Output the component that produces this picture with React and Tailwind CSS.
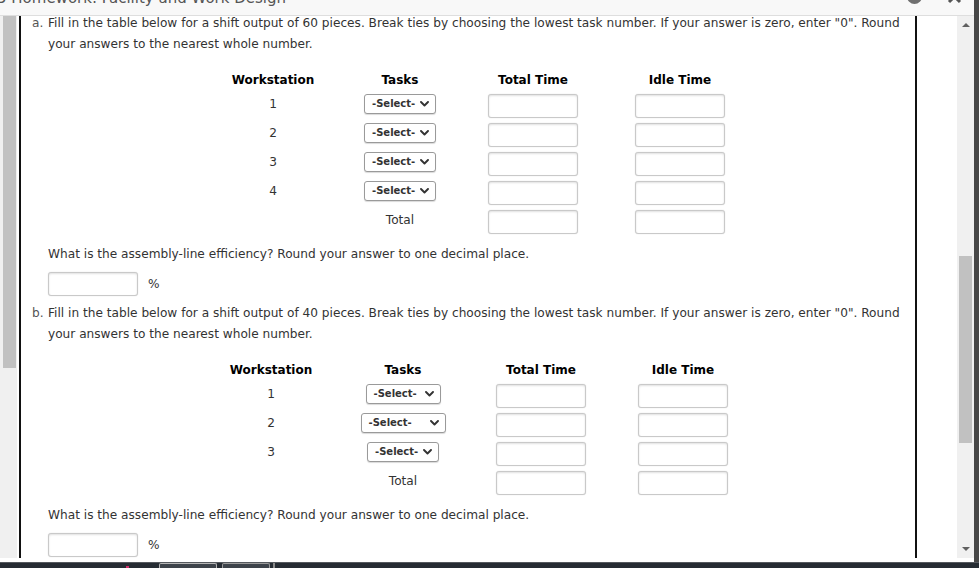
import React from "react";

function Chevron() {
  return (
    <svg width="9" height="6" viewBox="0 0 9 6" className="shrink-0">
      <path d="M1 1 L4.5 4.5 L8 1" fill="none" stroke="#333" strokeWidth="1.9" strokeLinecap="round" strokeLinejoin="round" />
    </svg>
  );
}

function Sel({ className }) {
  return (
    <div className={"h-[20px] flex items-center justify-between bg-white border border-[#9a9a9a] rounded-[3px] shadow-[0_1px_1px_rgba(0,0,0,0.15)] pl-[7px] pr-[6px] " + className}>
      <span className="text-[10px] leading-[12px] font-bold text-[#333]">-Select-</span>
      <Chevron />
    </div>
  );
}

function Box() {
  return (
    <div className="w-[90px] h-[24px] bg-white border border-[#c9c9c9] rounded-[3px] shadow-[inset_0_1px_2px_rgba(0,0,0,0.12),0_0_1px_rgba(0,0,0,0.2)]" />
  );
}

function Cell({ children }) {
  return <div className="flex justify-center">{children}</div>;
}

function TextCell({ children }) {
  return <div className="flex justify-center h-[20px] leading-[20px] text-[#333]">{children}</div>;
}

function Efficiency({ className }) {
  return (
    <div className={className}>
      <p className="whitespace-nowrap">What is the assembly-line efficiency? Round your answer to one decimal place.</p>
      <div className="flex items-center gap-[10px] mt-[7px]">
        <Box />
        <span className="text-[#333]">%</span>
      </div>
    </div>
  );
}

export default function App() {
  const rowsA = [
    { n: "1", s: "w-[72px]" },
    { n: "2", s: "w-[72px]" },
    { n: "3", s: "w-[72px]" },
    { n: "4", s: "w-[72px]" },
  ];
  const rowsB = [
    { n: "1", s: "w-[75px]" },
    { n: "2", s: "w-[85px]" },
    { n: "3", s: "w-[72px]" },
  ];
  return (
    <div className="w-[979px] h-[568px] overflow-hidden bg-white flex flex-col font-['DejaVu_Sans',sans-serif]">
      <div className="flex flex-1 min-h-0">
        <div className="flex-1 flex flex-col min-w-0">
          {/* top title bar (scrolled) */}
          <div className="h-[16px] shrink-0 bg-[#f8f8f8] border-b border-[#dedede] overflow-hidden flex items-start">
            <div className="-mt-[10px] -ml-[3px] text-[15px] leading-[17px] text-[#555] whitespace-nowrap">
              5 Homework: Facility and Work Design
            </div>
            <div className="flex-1" />
            <div className="w-[15px] h-[15px] rounded-full bg-[#707070] -mt-[11px]" />
            <svg width="15" height="15" viewBox="0 0 15 15" className="-mt-[11px] ml-[25px] mr-[12px]">
              <path d="M2 2 L13 13 M13 2 L2 13" stroke="#555" strokeWidth="3" />
            </svg>
          </div>

          {/* middle */}
          <div className="flex flex-1 min-h-0">
            {/* left scrollbar */}
            <div className="w-[17px] bg-[#f0f0f0] pl-[3px] pr-[1px]">
              <div className="w-[13px] h-[352px] bg-[#c1c1c1]" />
            </div>
            <div className="w-[2px] bg-white" />
            <div className="w-[2px] bg-[#111]" />

            {/* content */}
            <div className="w-[894px] overflow-hidden text-[12.15px] leading-[21px] text-[#333]">
              <div className="-mt-[3px] pl-[27px]">
                <p className="whitespace-nowrap">
                  <span className="inline-block w-[16px] -ml-[16px] text-[#555]">a.</span>Fill in the table below for a shift output of 60 pieces. Break ties by choosing the lowest task number. If your answer is zero, enter "0". Round
                  <br />
                  your answers to the nearest whole number.
                </p>

                {/* Table A */}
                <div className="ml-[162px] mt-[15px]">
                  <div className="grid grid-cols-[126px_128px_138px_156px] h-[20px] leading-[20px] text-[12px] font-bold text-black text-center">
                    <div>Workstation</div>
                    <div>Tasks</div>
                    <div>Total Time</div>
                    <div>Idle Time</div>
                  </div>
                  {rowsA.map((r) => (
                    <div key={r.n} className="grid grid-cols-[126px_128px_138px_156px] h-[29px] pt-[4px] items-start">
                      <TextCell>{r.n}</TextCell>
                      <Cell><Sel className={r.s} /></Cell>
                      <Cell><Box /></Cell>
                      <Cell><Box /></Cell>
                    </div>
                  ))}
                  <div className="grid grid-cols-[126px_128px_138px_156px] h-[29px] pt-[4px] items-start">
                    <div />
                    <TextCell>Total</TextCell>
                    <Cell><Box /></Cell>
                    <Cell><Box /></Cell>
                  </div>
                </div>

                <Efficiency className="mt-[9px]" />

                <p className="whitespace-nowrap mt-[7px]">
                  <span className="inline-block w-[16px] -ml-[16px] text-[#555]">b.</span>Fill in the table below for a shift output of 40 pieces. Break ties by choosing the lowest task number. If your answer is zero, enter "0". Round
                  <br />
                  your answers to the nearest whole number.
                </p>

                {/* Table B */}
                <div className="ml-[157px] mt-[15px]">
                  <div className="grid grid-cols-[132px_132px_144px_140px] h-[20px] leading-[20px] text-[12px] font-bold text-black text-center">
                    <div>Workstation</div>
                    <div>Tasks</div>
                    <div>Total Time</div>
                    <div>Idle Time</div>
                  </div>
                  {rowsB.map((r) => (
                    <div key={r.n} className="grid grid-cols-[132px_132px_144px_140px] h-[29px] pt-[4px] items-start">
                      <TextCell>{r.n}</TextCell>
                      <Cell><Sel className={r.s} /></Cell>
                      <Cell><Box /></Cell>
                      <Cell><Box /></Cell>
                    </div>
                  ))}
                  <div className="grid grid-cols-[132px_132px_144px_140px] h-[29px] pt-[4px] items-start">
                    <div />
                    <TextCell>Total</TextCell>
                    <Cell><Box /></Cell>
                    <Cell><Box /></Cell>
                  </div>
                </div>

                <Efficiency className="mt-[9px]" />
              </div>
            </div>

            <div className="w-[2px] bg-[#111]" />
            <div className="flex-1 bg-white" />

            {/* right scrollbar */}
            <div className="w-[17px] bg-[#f0f0f0] flex flex-col">
              <div className="h-[17px] flex items-center justify-center">
                <svg width="8" height="5" viewBox="0 0 8 5"><path d="M0 5 L4 1 L8 5 Z" fill="#606060" /></svg>
              </div>
              <div className="h-[223px]" />
              <div className="w-[13px] h-[187px] bg-[#c1c1c1] mx-auto" />
              <div className="flex-1" />
              <div className="h-[17px] flex items-center justify-center">
                <svg width="8" height="5" viewBox="0 0 8 5"><path d="M0 0 L4 4 L8 0 Z" fill="#606060" /></svg>
              </div>
            </div>
          </div>
          <div className="h-[4px] shrink-0 bg-white" />
        </div>
        <div className="w-[5px] bg-[#474747]" />
      </div>

      {/* taskbar strip */}
      <div className="h-[6px] shrink-0 bg-[#262c33] border-t border-[#55595e] flex items-end">
        <div className="ml-[126px] w-[3px] h-[2px] bg-[#d0306a]" />
        <div className="ml-[30px] w-[58px] h-[5px] bg-[#3d434a] border-t border-x border-[#b5b5b5] rounded-t-[2px]" />
        <div className="ml-[5px] w-[48px] h-[5px] bg-[#3d434a] border-t border-x border-[#9a9a9a] rounded-t-[2px]" />
        <div className="ml-[3px] w-[2px] h-[5px] bg-[#8a8a8a]" />
      </div>
    </div>
  );
}
